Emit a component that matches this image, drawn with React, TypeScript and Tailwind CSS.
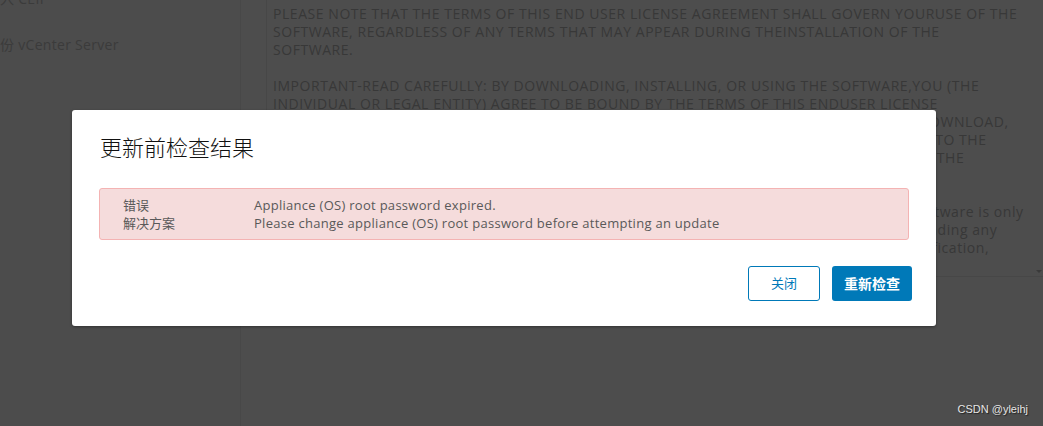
import React from "react";

const eula = [
  "PLEASE NOTE THAT THE TERMS OF THIS END USER LICENSE AGREEMENT SHALL GOVERN YOURUSE OF THE",
  "SOFTWARE, REGARDLESS OF ANY TERMS THAT MAY APPEAR DURING THEINSTALLATION OF THE",
  "SOFTWARE.",
  "\u00a0",
  "IMPORTANT-READ CAREFULLY: BY DOWNLOADING, INSTALLING, OR USING THE SOFTWARE,YOU (THE",
  "INDIVIDUAL OR LEGAL ENTITY) AGREE TO BE BOUND BY THE TERMS OF THIS ENDUSER LICENSE",
  "AGREEMENT (\"EULA\"). IF YOU DO NOT AGREE TO THE TERMS OF THIS EULA, YOU MUST NOT DOWNLOAD,",
  "INSTALL OR USE THE SOFTWARE AND YOU MUST DELETE OR RETURN THE UNUSED SOFTWARE TO THE",
  "VENDOR FROM WHICH YOU ACQUIRED IT WITHIN THIRTY (30) DAYS AND REQUEST REFUND OF THE",
  "LICENSE FEE, IF ANY.",
  "\u00a0",
  "EVALUATION LICENSE. If You are licensing the Software for evaluation use, Your use of the Software is only",
  "permitted in a non-production environment for the period limited by License Key. Notwithstanding any",
  "other provision in this EULA, an Evaluation License is provided to You \"AS-IS\" without indemnification,",
];

export default function App() {
  return (
    <div
      className="relative w-[1043px] h-[426px] overflow-hidden bg-[#4d4d4d] flex"
      style={{ fontFamily: "'Open Sans', 'Noto Sans CJK SC', sans-serif" }}
    >
      <aside className="w-[241px] shrink-0 border-r border-[#484848] bg-[#4c4c4c] text-[#3b3b3b] text-[14px] tracking-[0.3px]">
        <div className="-mt-[11px] leading-[20px]">入 CEIP</div>
        <div className="mt-[26px] leading-[20px]">份 vCenter Server</div>
      </aside>
      <main className="flex-1 pl-[25px]">
        <div className="h-[277px] border-l border-b border-[#474747] pl-[6px] pr-[12px] pt-[5px] text-[14px] leading-[18px] tracking-[0.55px] text-[#383838] overflow-hidden relative">
          {eula.map((l, i) => (
            <div key={i} className="whitespace-nowrap">{l}</div>
          ))}
          <div className="absolute right-[1px] bottom-[3px] w-0 h-0 border-l-[3px] border-r-[3px] border-t-[3px] border-l-transparent border-r-transparent border-t-[#3a3a3a]" />
        </div>
      </main>

      <div className="absolute left-[72px] top-[110px] w-[864px] h-[216px] bg-white rounded-[3px] shadow-[0_1px_3px_rgba(0,0,0,0.35)] flex flex-col px-[27px] pt-[20px] pb-[25px]">
        <h1
          className="text-[22px] leading-[32px] text-[#111] font-light pl-[1px]"
          style={{ fontFamily: "'Noto Sans CJK SC', sans-serif" }}
        >
          更新前检查结果
        </h1>
        <div className="mt-[26px] border border-[#f4b3b3] bg-[#f5dcdc] rounded-[3px] pl-[23px] py-[7px] text-[13px] leading-[18px] text-[#595959]">
          <div className="flex">
            <div className="w-[131px] shrink-0">错误</div>
            <div className="tracking-[0.28px]">Appliance (OS) root password expired.</div>
          </div>
          <div className="flex">
            <div className="w-[131px] shrink-0">解决方案</div>
            <div className="tracking-[0.28px]">Please change appliance (OS) root password before attempting an update</div>
          </div>
        </div>
        <div className="mt-auto flex justify-end gap-[12px] -mr-[3px]">
          <button className="w-[72px] h-[35px] border border-[#0079b8] rounded-[3px] text-[#0079b8] text-[13px] bg-white">
            关闭
          </button>
          <button className="w-[80px] h-[35px] rounded-[3px] bg-[#0079b8] text-white text-[14px] font-bold">
            重新检查
          </button>
        </div>
      </div>

      <div
        className="absolute right-[15px] bottom-[9px] text-[11px] text-[#e6e6e6]"
        style={{ fontFamily: "'Liberation Sans', sans-serif", textShadow: "1px 1px 1px #222" }}
      >
        CSDN @yleihj
      </div>
    </div>
  );
}
